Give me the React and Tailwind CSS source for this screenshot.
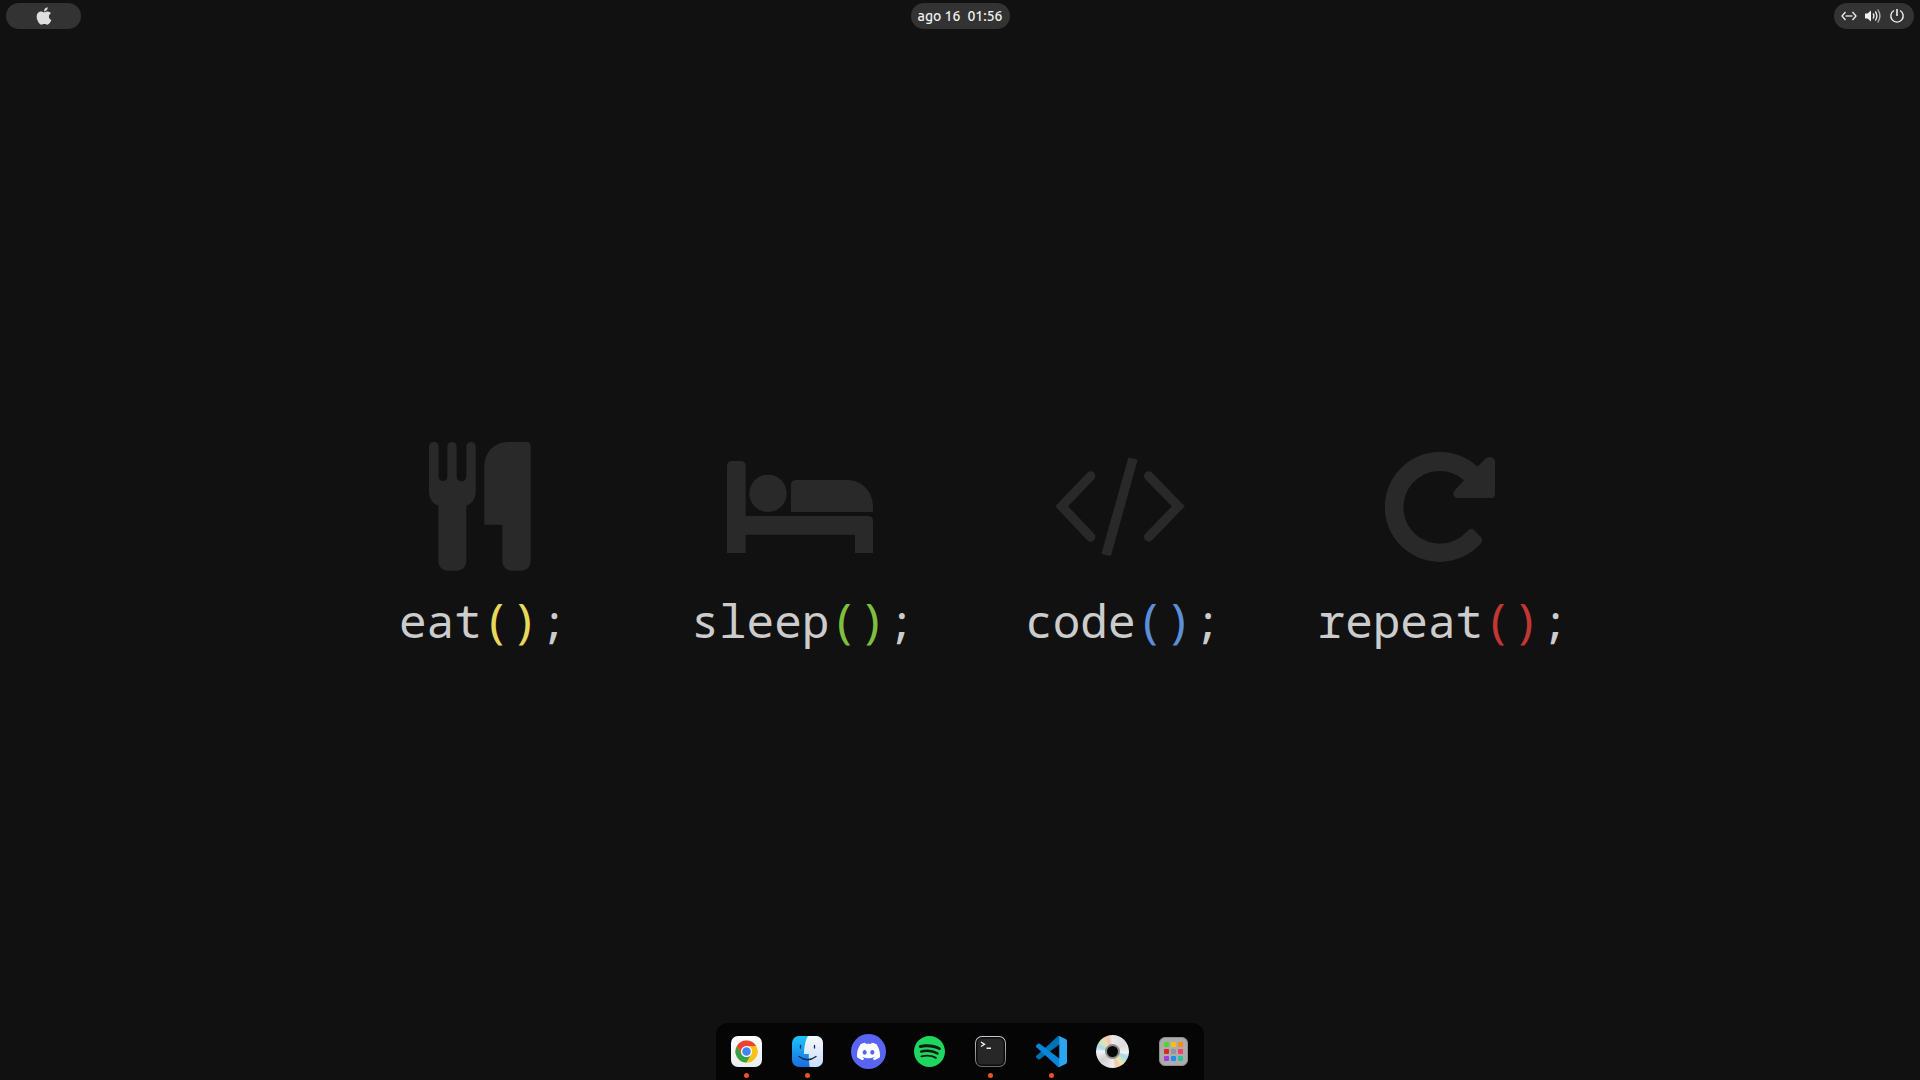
import { FaApple } from "react-icons/fa";
import { SiDiscord, SiSpotify } from "react-icons/si";

function ForkKnife() {
  return (
    <svg className="w-[102px] h-[129px]" viewBox="149 66 306 387" fill="currentColor" aria-hidden="true">
      <path d="M149 80a14 14 0 0 1 29 0V170a13 13 0 0 0 26 0V80a14 14 0 0 1 28 0V170a14 14 0 0 0 29 0V80a14 14 0 0 1 28 0V218Q288 246 261 257V424a28 28 0 0 1-28 28H205a28 28 0 0 1-28-28V257Q150 246 149 218Z" />
      <path d="M385 66H442a12 12 0 0 1 12 12V424a28 28 0 0 1-28 28H397a28 28 0 0 1-28-28V314H315V136A70 70 0 0 1 385 66Z" />
    </svg>
  );
}

function Bed() {
  return (
    <svg className="w-[146px] h-[92px]" viewBox="141 120 438 276" fill="currentColor" aria-hidden="true">
      <path d="M141 134a14 14 0 0 1 14-14H183a14 14 0 0 1 14 14V285H565a14 14 0 0 1 14 14V396H525V341H197V396H141Z" />
      <circle cx="264" cy="217" r="56" />
      <path d="M333 191a14 14 0 0 1 14-14H500C550 177 579 215 579 260V273H333Z" />
    </svg>
  );
}

function Code() {
  return (
    <svg className="w-[132px] h-[99px]" viewBox="135 109 396 297" fill="none" stroke="currentColor" strokeLinecap="round" strokeLinejoin="miter" aria-hidden="true">
      <path strokeWidth="28" d="M245 166 158 257l87 92M419 166l89 91-89 92" />
      <path strokeWidth="8" fill="currentColor" strokeLinejoin="round" d="m361 115 20 5-78 281-21-4z" />
    </svg>
  );
}

function Repeat() {
  return (
    <svg className="w-[110px] h-[110px]" viewBox="255 93 330 330" fill="currentColor" aria-hidden="true">
      <path d="M532 137 558 112Q572 103 583 114 585 118 585 122V220Q585 231 574 231H474Q460 231 460 217 461 211 466 206L492 178A109 109 0 1 0 500 332L506 326Q515 320 522 327L543 349Q550 357 543 367A165 165 0 1 1 532 137Z" />
    </svg>
  );
}

const steps = [
  { word: "eat", color: "text-[#e8d85c]", Icon: ForkKnife },
  { word: "sleep", color: "text-[#7fbf3f]", Icon: Bed },
  { word: "code", color: "text-[#5b8fd9]", Icon: Code },
  { word: "repeat", color: "text-[#c23634]", Icon: Repeat },
];

function Chrome() {
  return (
    <svg className="size-[31px]" viewBox="0 0 31 31" aria-hidden="true">
      <defs>
        <linearGradient id="chromeTile" x2="0" y2="1"><stop stopColor="#fff" /><stop offset="1" stopColor="#e9edf3" /></linearGradient>
      </defs>
      <rect width="31" height="31" rx="7" fill="url(#chromeTile)" />
      <circle cx="15.5" cy="15.5" r="11" fill="#fbc116" />
      <path d="M15.5 15.5 5.97 10A11 11 0 0 1 25.03 10H15.5Z" fill="#ea4335" />
      <path d="M5.97 10A11 11 0 0 0 15.5 26.5L20.26 18.25 15.5 15.5 10.74 18.25Z" fill="#34a345" />
      <path d="M15.5 10H25.03A11 11 0 0 1 15.5 26.5L20.26 18.25Z" fill="#fbc116" />
      <path d="M5.97 10 10.74 18.25 15.5 10Z" fill="#ea4335" />
      <circle cx="15.5" cy="15.5" r="5.6" fill="#fff" />
      <circle cx="15.5" cy="15.5" r="4.3" fill="#4285f4" />
    </svg>
  );
}

function Finder() {
  return (
    <svg className="size-[31px]" viewBox="0 0 31 31" aria-hidden="true">
      <defs>
        <linearGradient id="finderBlue" x2="0" y2="1"><stop stopColor="#1cc4fb" /><stop offset="1" stopColor="#1a6de0" /></linearGradient>
        <linearGradient id="finderWhite" x2="0" y2="1"><stop stopColor="#f8fafe" /><stop offset="1" stopColor="#c9dcf8" /></linearGradient>
      </defs>
      <rect width="31" height="31" rx="7" fill="url(#finderBlue)" />
      <path d="M16 0H24a7 7 0 0 1 7 7V24a7 7 0 0 1-7 7H17.7C17 27 16.7 22 16.8 18H12C12 11 13.5 4 16 0Z" fill="url(#finderWhite)" />
      <path d="M8.5 9.5v2.5M22.5 9.5v2.5M7 20.5q8.5 6.5 17 0" stroke="#12294a" strokeWidth="1.3" strokeLinecap="round" fill="none" />
    </svg>
  );
}

function Discord() {
  return (
    <span className="grid size-[35px] place-items-center rounded-full bg-[#5865f2] text-white">
      <SiDiscord className="size-[23px]" />
    </span>
  );
}

function Spotify() {
  return (
    <span className="grid size-[31px] place-items-center rounded-full bg-[#101a14] text-[#1ed760]">
      <SiSpotify className="size-[31px]" />
    </span>
  );
}

function Terminal() {
  return (
    <svg className="size-[31px]" viewBox="0 0 31 31" aria-hidden="true">
      <defs>
        <linearGradient id="termEdge" x2="0" y2="1"><stop stopColor="#c3ccd0" /><stop offset="1" stopColor="#686c6e" /></linearGradient>
      </defs>
      <rect width="31" height="31" rx="7" fill="url(#termEdge)" />
      <rect x="1" y="1" width="29" height="29" rx="6" fill="#0c0c0c" />
      <rect x="2.5" y="2.5" width="26" height="26" rx="4.5" fill="#272727" />
      <path d="m6 6 3.5 2.3L6 10.5M11.5 12.3h4.5" stroke="#eee" strokeWidth="1.4" fill="none" />
    </svg>
  );
}

function VsCode() {
  return (
    <svg className="size-[31px]" viewBox="0 0 100 100" aria-hidden="true">
      <path d="M96.4 10.8 75.8.9a6.2 6.2 0 0 0-7.1 1.2L1.3 63.6a4.2 4.2 0 0 0 0 6.2l5.5 5a4.2 4.2 0 0 0 5.3.2L93.4 13.4c2.7-2 6.6-.1 6.6 3.3v-.2a6.3 6.3 0 0 0-3.6-5.7Z" fill="#0070b5" />
      <path d="m96.4 89.2-20.6 9.9a6.2 6.2 0 0 1-7.1-1.2L1.3 36.4a4.2 4.2 0 0 1 0-6.2l5.5-5a4.2 4.2 0 0 1 5.3-.2l81.3 61.6c2.7 2 6.6.1 6.6-3.3v.2a6.3 6.3 0 0 1-3.6 5.7Z" fill="#0a86d8" />
      <path d="M75.9 99.1a6.2 6.2 0 0 1-7.1-1.2c2.3 2.3 6.2.7 6.2-2.6V4.7c0-3.3-3.900-4.900-6.200-2.600A6.2 6.2 0 0 1 75.900.900l20.500 9.900a6.300 6.300 0 0 1 3.600 5.600v67.200a6.300 6.300 0 0 1-3.600 5.600Z" fill="#2aa5f2" />
    </svg>
  );
}

function Disc() {
  return (
    <span className="grid size-[33px] place-items-center rounded-full bg-[conic-gradient(from_0deg,#e9e9e9_0deg,#dcdcdc_60deg,#f2f2f2_95deg,#a9d3f0_110deg,#bfe8c4_128deg,#f3e2b0_145deg,#f2c4a8_162deg,#ededed_178deg,#d2d2d2_230deg,#f4f4f4_270deg,#a9d3f0_288deg,#c5e8c4_305deg,#f3dcb0_322deg,#f2c4b0_340deg,#e9e9e9_360deg)]">
      <span className="size-[15px] rounded-full border-2 border-[#8d8d8d] bg-[#080808]" />
    </span>
  );
}

const tiles = ["bg-[#4fd52f]", "bg-[#fdc010]", "bg-[#fb8c0c]", "bg-[#e02420]", "bg-[#8f979b]", "bg-[#fb3d63]", "bg-[#a63bd8]", "bg-[#1b8df5]", "bg-[#27c49c]"];

function Launchpad() {
  return (
    <span className="grid size-[29px] grid-cols-[repeat(3,5px)] place-content-center gap-0.5 rounded-md border border-[#8e8e8e] bg-[#acacac]">
      {tiles.map((tile) => (
        <span key={tile} className={`size-[5px] rounded-[1px] ${tile}`} />
      ))}
    </span>
  );
}

const apps = [
  { name: "Google Chrome", Icon: Chrome, running: true },
  { name: "Files", Icon: Finder, running: true },
  { name: "Discord", Icon: Discord },
  { name: "Spotify", Icon: Spotify },
  { name: "Terminal", Icon: Terminal, running: true },
  { name: "Visual Studio Code", Icon: VsCode, running: true },
  { name: "Disc", Icon: Disc },
  { name: "Show Applications", Icon: Launchpad },
];

export default function App() {
  return (
    <div className="flex min-h-screen flex-col bg-[#111111] text-[#f2f2f2]">
      <header className="grid h-8 grid-cols-3 px-1.5 pt-[3px]">
        <button aria-label="Activities" className="grid h-[26px] w-[75px] place-items-center rounded-full bg-[#333333] text-[#dedede]">
          <FaApple className="size-5" />
        </button>
        <button className="flex h-[26px] w-[99px] items-center justify-center gap-[7px] justify-self-center whitespace-nowrap rounded-full bg-[#333333] font-[Ubuntu,'Noto_Sans',sans-serif] text-sm font-medium">
          <span>ago 16</span>
          <span>01:56</span>
        </button>
        <button aria-label="System menu" className="flex h-[26px] w-20 items-center justify-center gap-2 justify-self-end rounded-full bg-[#333333] pr-0.5">
          <svg className="size-4" viewBox="0 0 16 16" fill="none" stroke="currentColor" strokeWidth="1.3" aria-hidden="true">
            <path d="M4.5 4 1 8l3.5 4M11.5 4 15 8l-3.5 4" />
            <path d="M4.5 8h7" strokeWidth="2" stroke="#a8a8a8" />
          </svg>
          <svg className="size-4" viewBox="0 0 16 16" fill="none" stroke="currentColor" strokeWidth="1.3" aria-hidden="true">
            <path d="M0 5.5h2.5L6 2.5v11L2.5 10.5H0Z" fill="currentColor" stroke="none" />
            <path d="M8 5.5q2 2.5 0 5M10.3 3.5q3.2 4.5 0 9" />
            <path d="M12.7 1.5q4.5 6.5 0 13" stroke="#b8b8b8" />
          </svg>
          <svg className="size-4" viewBox="0 0 16 16" fill="none" stroke="currentColor" strokeWidth="1.4" aria-hidden="true">
            <path d="M5 2.5a6.2 6.2 0 1 0 6 0" />
            <path d="M8 1v7" strokeWidth="1.6" />
          </svg>
        </button>
      </header>

      <main className="flex flex-1 flex-col justify-center pt-10">
        <ul className="mx-auto grid w-2/3 grid-cols-4">
          {steps.map(({ word, color, Icon }) => (
            <li key={word} className="flex flex-col items-center">
              <div className="flex h-32 items-center text-[#292929]">
                <Icon />
              </div>
              <p className="mt-4 flex h-[66px] items-baseline whitespace-nowrap pl-1.5 font-['Droid_Sans_Mono','Noto_Mono','Noto_Sans_Mono','DejaVu_Sans_Mono',monospace] text-[46px] leading-[66px] text-[#cccccc]">
                {word}
                <span className={`text-5xl leading-none ${color}`}>()</span>;
              </p>
            </li>
          ))}
        </ul>
      </main>

      <footer className="flex justify-center">
        <nav aria-label="Dock" className="flex h-[57px] rounded-t-xl bg-[#050505]">
          {apps.map(({ name, Icon, running }) => (
            <button key={name} aria-label={name} className="flex w-[61px] flex-col items-center">
              <span className="mt-2.5 grid h-9 place-items-center">
                <Icon />
              </span>
              {running && <span className="mt-1 size-[5px] rounded-full bg-[#e95420]" />}
            </button>
          ))}
        </nav>
      </footer>
    </div>
  );
}
